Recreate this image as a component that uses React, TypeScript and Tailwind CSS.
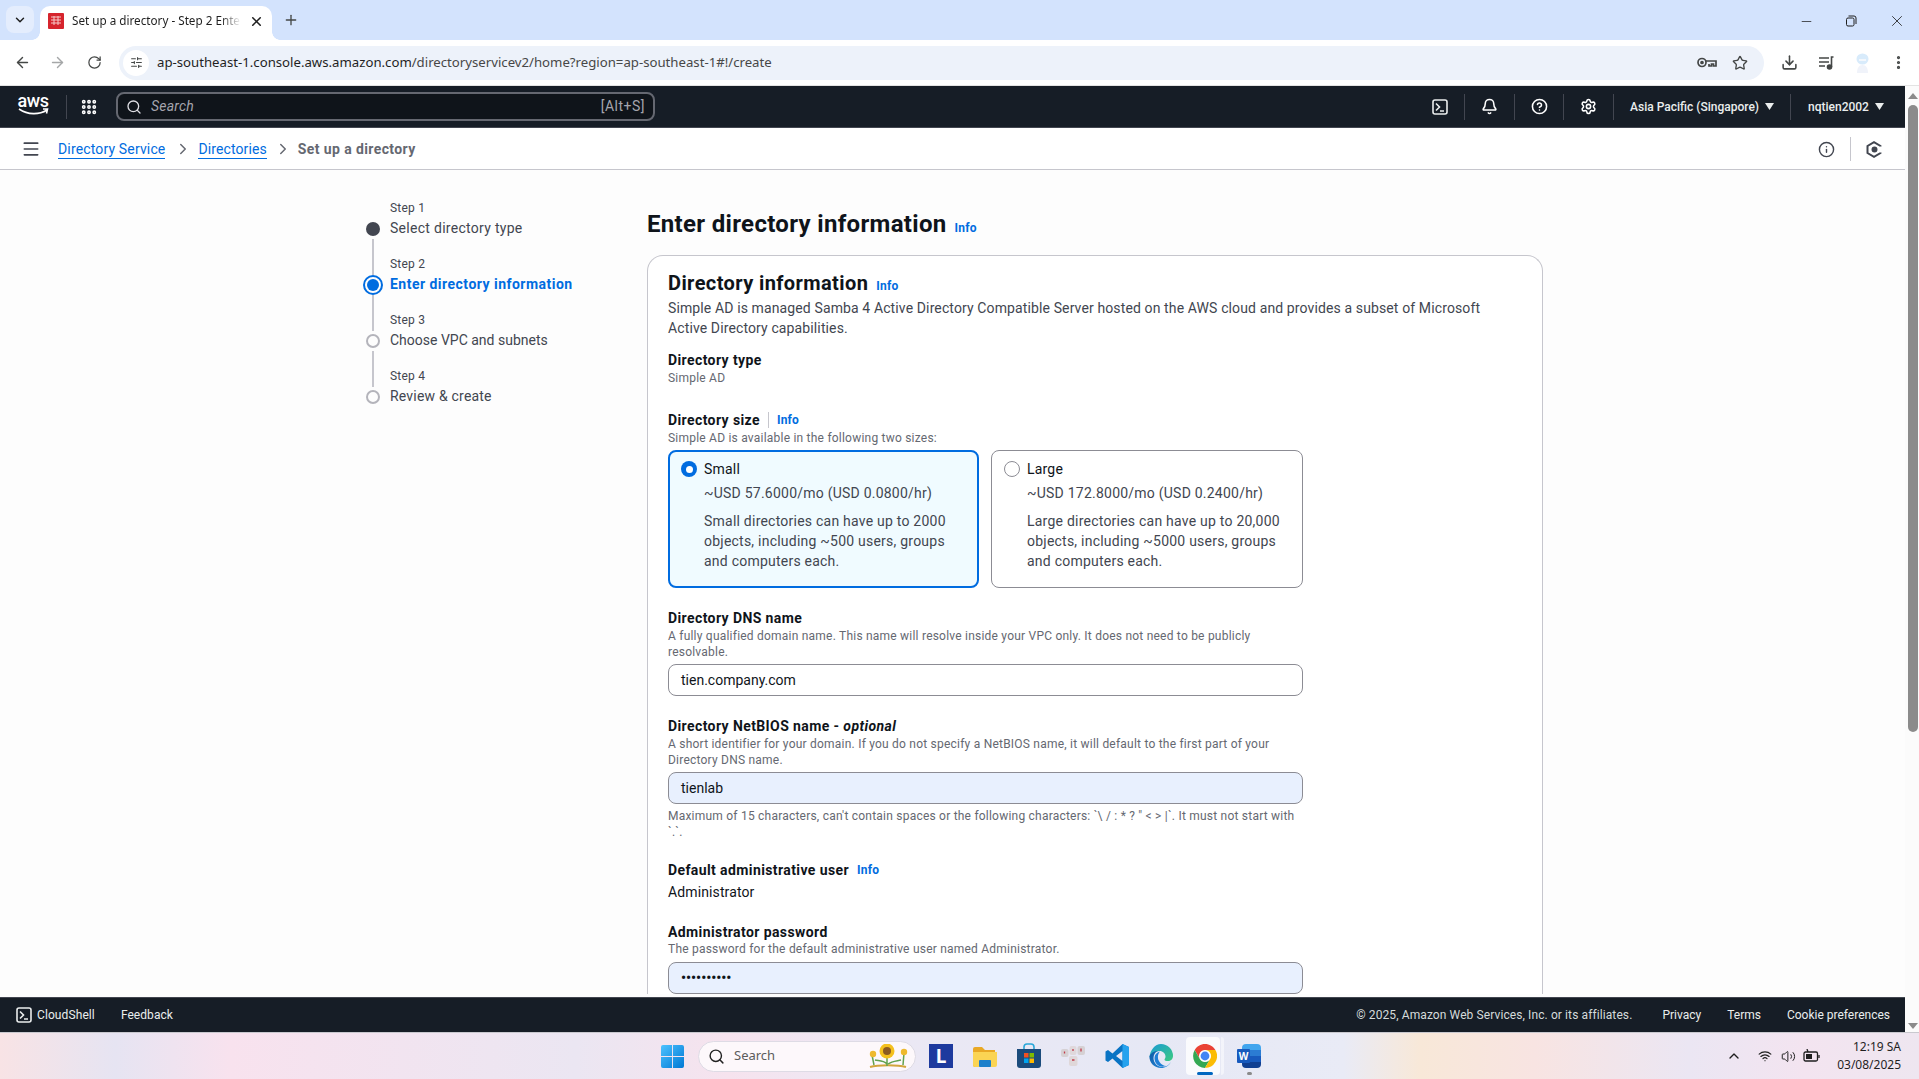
import React from "react";
import { ArrowLeft, ArrowRight, RotateCw, SlidersHorizontal, Star, Download, EllipsisVertical, Menu, ChevronRight, X, Plus, ChevronDown, Minus, Search, Grip, Bell, CircleHelp, Settings, Info, ChevronUp, Wifi, Volume2 } from "lucide-react";

const Shell = ({ size = 16 }: { size?: number }) => (
  <svg width={size} height={size} viewBox="0 0 16 16" fill="none" stroke="currentColor" strokeWidth="1.6">
    <rect x="1" y="1" width="14" height="14" rx="2" />
    <path d="M4 4.5 7.5 8 4 11.5M8 12h4" />
  </svg>
);
const Caret = () => (
  <svg width="9" height="7" viewBox="0 0 9 7" className="shrink-0"><path d="M0 0h9L4.5 7z" fill="currentColor" /></svg>
);
const InfoLink = ({ cls = "" }: { cls?: string }) => <span className={`text-[12px] font-bold tracking-[0.2px] text-[#006ce0] ${cls}`}>Info</span>;

const steps = [
  { l: "Step 1", t: "Select directory type", s: "done", c: "tracking-[0.29px] text-[#424650]" },
  { l: "Step 2", t: "Enter directory information", s: "active", c: "font-bold tracking-[0.48px] text-[#006ce0]" },
  { l: "Step 3", t: "Choose VPC and subnets", s: "todo", c: "text-[#424650]" },
  { l: "Step 4", t: "Review & create", s: "todo", c: "tracking-[0.2px] text-[#424650]" },
];

function Wizard() {
  return (
    <div className="w-[284px] shrink-0 pt-[29px]">
      {steps.map((s, i) => (
        <div key={s.l}>
          <div className="flex h-5 items-center">
            <div className="flex h-full w-5 justify-center">{i > 0 && <div className="h-full w-[2px] bg-[#c6c6cd]" />}</div>
            <div className="mb-[2px] ml-[7px] text-[12px] tracking-[0.2px] text-[#424650]">{s.l}</div>
          </div>
          <div className="flex h-9">
            <div className="flex w-5 flex-col items-center">
              <div className="flex h-5 w-5 shrink-0 items-center justify-center">
                {s.s === "done" && <div className="h-[14px] w-[14px] rounded-full bg-[#424650]" />}
                {s.s === "active" && (
                  <div className="flex h-5 w-5 items-center justify-center rounded-full border-2 border-[#006ce0]">
                    <div className="h-3 w-3 rounded-full bg-[#006ce0]" />
                  </div>
                )}
                {s.s === "todo" && <div className="h-[14px] w-[14px] rounded-full border-2 border-[#b4b4bb]" />}
              </div>
              {i < 3 && <div className="w-[2px] flex-1 bg-[#c6c6cd]" />}
            </div>
            <div className={`ml-[7px] mt-[-1px] h-5 text-[14px] leading-5 ${s.c}`}>{s.t}</div>
          </div>
        </div>
      ))}
    </div>
  );
}

function Tile({ name, price, lines, selected }: { name: string; price: string; lines: string[]; selected?: boolean }) {
  return (
    <div className={`h-[138px] rounded-lg ${selected ? "w-[311px] border-2 border-[#006ce0] bg-[#f0fbff] pl-[11px] pt-[7px]" : "w-[312px] border border-[#8c8c94] bg-white pl-[12px] pt-[8px]"}`}>
      <div className="flex h-5 items-center gap-[7px]">
        {selected ? (
          <div className="flex h-4 w-4 items-center justify-center rounded-full bg-[#006ce0]"><div className="h-[7px] w-[7px] rounded-full bg-white" /></div>
        ) : (
          <div className="h-4 w-4 rounded-full border border-[#8c8c94] bg-white" />
        )}
        <span className="text-[14px] tracking-[0.2px] text-[#0f141a]">{name}</span>
      </div>
      <div className="mt-[4px] pl-[23px] text-[14px] leading-5 tracking-[0.23px] text-[#424650]">{price}</div>
      <div className="mt-[8px] pl-[23px] text-[14px] leading-5 tracking-[0.23px] text-[#424650]">
        {lines.map((x) => <div key={x}>{x}</div>)}
      </div>
    </div>
  );
}

const Label = ({ children, cls = "" }: { children: React.ReactNode; cls?: string }) => (
  <div className={`text-[14px] font-bold leading-[18px] tracking-[0.4px] text-[#0f141a] ${cls}`}>{children}</div>
);
const Desc = ({ children, cls = "" }: { children: React.ReactNode; cls?: string }) => (
  <div className={`text-[12px] leading-4 tracking-[0.22px] text-[#656871] ${cls}`}>{children}</div>
);
const Field = ({ v, auto, cls = "" }: { v: string; auto?: boolean; cls?: string }) => (
  <div className={`flex h-[32px] items-center rounded-lg border border-[#8c8c94] px-3 text-[14px] text-[#0f141a] ${auto ? "bg-[#e8f0fe]" : "bg-white"} ${cls}`}>{v}</div>
);

function Card() {
  return (
    <div className="mt-[11px] rounded-t-2xl border border-b-0 border-[#c6c6cd] bg-white px-5 pt-[11px]">
      <div className="flex items-baseline gap-2 leading-[32px]">
        <span className="text-[20px] font-bold tracking-[0.4px] text-[#0f141a]">Directory information</span>
        <InfoLink />
      </div>
      <div className="mt-[-4px] text-[14px] leading-5 tracking-[0.12px] text-[#424650]">
        Simple AD is managed Samba 4 Active Directory Compatible Server hosted on the AWS cloud and provides a subset of Microsoft<br />Active Directory capabilities.
      </div>
      <Label cls="mt-[13px]">Directory type</Label>
      <Desc cls="mt-[1px]">Simple AD</Desc>
      <div className="w-[635px]">
        <div className="mt-[25px] flex h-[18px] items-center">
          <Label>Directory size</Label>
          <div className="mx-[8px] h-4 w-px bg-[#c6c6cd]" />
          <InfoLink />
        </div>
        <Desc cls="mt-[1px]">Simple AD is available in the following two sizes:</Desc>
        <div className="mt-[4px] flex justify-between">
          <Tile selected name="Small" price="~USD 57.6000/mo (USD 0.0800/hr)" lines={["Small directories can have up to 2000", "objects, including ~500 users, groups", "and computers each."]} />
          <Tile name="Large" price="~USD 172.8000/mo (USD 0.2400/hr)" lines={["Large directories can have up to 20,000", "objects, including ~5000 users, groups", "and computers each."]} />
        </div>
        <Label cls="mt-[21px]">Directory DNS name</Label>
        <Desc cls="mt-[1px]">A fully qualified domain name. This name will resolve inside your VPC only. It does not need to be publicly<br />resolvable.</Desc>
        <Field v="tien.company.com" cls="mt-[4px]" />
        <Label cls="mt-[21px]">Directory NetBIOS name - <i>optional</i></Label>
        <Desc cls="mt-[1px]">A short identifier for your domain. If you do not specify a NetBIOS name, it will default to the first part of your<br />Directory DNS name.</Desc>
        <Field v="tienlab" auto cls="mt-[4px]" />
        <Desc cls="mt-[4px]">Maximum of 15 characters, can't contain spaces or the following characters: `\ / : * ? " &lt; &gt; |`. It must not start with<br />`.`.</Desc>
        <div className="mt-[21px] flex items-center gap-2"><Label>Default administrative user</Label><InfoLink /></div>
        <div className="mt-[3px] text-[14px] leading-5 tracking-[0.12px] text-[#0f141a]">Administrator</div>
        <Label cls="mt-[21px]">Administrator password</Label>
        <Desc>The password for the default administrative user named Administrator.</Desc>
        <Field v="••••••••••" auto cls="mt-[5px] font-bold" />
      </div>
    </div>
  );
}

function TabStrip() {
  return (
    <div className="flex h-[40px] items-end bg-[#d3e3fd] font-['Noto_Sans',sans-serif] text-[#1f1f1f]">
      <div className="mb-[7px] ml-[6px] flex h-[27px] w-[28px] items-center justify-center rounded-lg bg-[#e4edfd]"><ChevronDown size={14} strokeWidth={2.5} /></div>
      <div className="relative ml-[6px] flex h-[34px] w-[232px] items-center rounded-t-[10px] bg-white pb-[4px] pl-[8px] text-[11.7px]">
        <div className="absolute bottom-0 left-[-8px] h-2 w-2 bg-[radial-gradient(circle_at_0_0,transparent_7.5px,white_8px)]" />
        <div className="absolute bottom-0 right-[-8px] h-2 w-2 bg-[radial-gradient(circle_at_100%_0,transparent_7.5px,white_8px)]" />
        <svg width="16" height="16" viewBox="0 0 16 16" className="shrink-0"><rect width="16" height="16" rx="1" fill="#d6242d" /><path d="M3 4h10M3 7h10M3 10h10M6 3v9M10 3v9" stroke="#f6c9c9" strokeWidth="1" /></svg>
        <span className="ml-[8px] w-[169px] overflow-hidden whitespace-nowrap [mask-image:linear-gradient(90deg,black_88%,transparent)]">Set up a directory - Step 2 Enter</span>
        <X size={15} className="ml-[8px]" strokeWidth={2.5} />
      </div>
      <Plus size={16} className="mb-[12px] ml-[11px] text-[#444746]" strokeWidth={2} />
      <div className="mb-[10px] ml-auto flex items-center text-[#1f1f1f]">
        <Minus size={15} className="mr-[31px]" strokeWidth={1.2} />
        <svg width="12" height="12" viewBox="0 0 12 12" fill="none" stroke="currentColor" className="mr-[31px]"><rect x="1.5" y="3" width="7.5" height="8" rx="1.5" /><path d="M3.5 1h5.5a2 2 0 0 1 2 2v6" /></svg>
        <X size={18} className="mr-[13px]" strokeWidth={1.1} />
      </div>
    </div>
  );
}

function Toolbar() {
  return (
    <div className="flex h-[46px] items-center border-b border-[#e3e3e3] bg-white font-['Noto_Sans',sans-serif] text-[#444746]">
      <ArrowLeft size={17} className="ml-[14px]" strokeWidth={2} />
      <ArrowRight size={17} className="ml-[18px] text-[#a5a7a8]" strokeWidth={2} />
      <RotateCw size={15} className="ml-[21px]" strokeWidth={2} />
      <div className="ml-[17px] flex h-[34px] w-[1645px] items-center rounded-full bg-[#edf2fa] pl-[4px] pr-[16px]">
        <div className="flex h-[26px] w-[26px] items-center justify-center rounded-full bg-white"><SlidersHorizontal size={13} strokeWidth={2} /></div>
        <span className="ml-[8px] mt-[1px] whitespace-nowrap text-[13.2px] text-[#1f1f1f]">ap-southeast-1.console.aws.amazon.com<span className="text-[#474747]">/directoryservicev2/home?region=ap-southeast-1#!/create</span></span>
        <div className="ml-auto flex items-center gap-[15px]">
          <svg width="20" height="11" viewBox="0 0 20 11" fill="none" stroke="currentColor" strokeWidth="1.7"><circle cx="5" cy="5.500" r="4" /><circle cx="5" cy="5.500" r="1" fill="currentColor" /><path d="M9 4h10v5h-2.500V7h-2v2H12V7" /></svg>
          <Star size={16} strokeWidth={2} />
        </div>
      </div>
      <Download size={17} className="ml-[17px]" strokeWidth={2.2} />
      <svg width="16" height="14" viewBox="0 0 16 14" fill="none" stroke="currentColor" strokeWidth="1.6" className="ml-[21px]"><path d="M0 2h10M0 6h10M0 10h6M14.500 1h-2v10" /><circle cx="10.500" cy="11" r="2" fill="currentColor" /></svg>
      <svg width="15" height="20" viewBox="0 0 15 20" className="ml-[20px]"><ellipse cx="7.500" cy="6" rx="6" ry="5.500" fill="#d8ebfb" /><path d="M2 20c0-5 2-8 5.500-8s5.500 3 5.500 8z" fill="#f0f3fa" /><path d="M4 7h7" stroke="#f3f7fc" strokeWidth="2" /></svg>
      <EllipsisVertical size={17} className="ml-[20px]" strokeWidth={2.5} />
    </div>
  );
}

function AwsNav() {
  const Cell = ({ w, children }: { w: string; children: React.ReactNode }) => (
    <div className={`flex h-[26px] items-center justify-center border-l border-[#424650] ${w}`}>{children}</div>
  );
  return (
    <div className="flex h-[42px] items-center border-b border-[#424650] bg-[#161d26] text-[#eaeded]">
      <div className="ml-[17px] flex w-[32px] flex-col items-center text-white">
        <span className="mt-[-3px] text-[18px] font-medium leading-[13px] tracking-[-0.4px]">aws</span>
        <svg width="31" height="8" viewBox="0 0 31 8" fill="none" className="mt-[1px]"><path d="M1 1c9 6 20 6 28 1M25 1h4.500l-1 4.500" stroke="#fff" strokeWidth="1.6" /></svg>
      </div>
      <div className="ml-[17px] h-6 w-px bg-[#424650]" />
      <Grip size={18} strokeWidth={3.2} className="ml-[13px] text-white" />
      <div className="ml-[18px] flex h-[29px] w-[539px] items-center rounded-lg border-2 border-[#656871] bg-[#0f141a] px-2">
        <Search size={16} className="text-[#dedee3]" strokeWidth={2} />
        <span className="ml-[9px] text-[14px] italic tracking-[0.2px] text-[#a4a4ad]">Search</span>
        <span className="ml-auto text-[14px] tracking-[0.5px] text-[#a4a4ad]">[Alt+S]</span>
      </div>
      <div className="ml-auto flex items-center">
        <div className="flex h-[26px] w-[49px] items-center justify-center"><Shell size={16} /></div>
        <Cell w="w-[50px]"><Bell size={17} strokeWidth={2.2} className="text-white" /></Cell>
        <Cell w="w-[49px]"><CircleHelp size={17} strokeWidth={2.2} className="text-white" /></Cell>
        <Cell w="w-[50px]"><Settings size={17} strokeWidth={2.2} className="text-white" /></Cell>
        <div className="flex h-[26px] w-[177px] items-center gap-[6px] whitespace-nowrap border-l border-[#424650] pl-[16px] text-[12px] font-medium"><span>Asia Pacific (Singapore)</span><Caret /></div>
        <div className="flex h-[26px] w-[115px] items-center gap-[6px] border-l border-[#424650] pl-[17px] text-[12px] font-medium"><span>nqtien2002</span><Caret /></div>
      </div>
    </div>
  );
}

function Breadcrumb() {
  return (
    <div className="flex h-[42px] shrink-0 items-center border-b border-[#c6c6cd] bg-white pt-[1px] text-[14px] text-[#424650]">
      <Menu size={20} className="ml-[21px]" strokeWidth={2} />
      <span className="ml-[17px] border-b border-[#006ce0] leading-[18px] tracking-[0.15px] text-[#006ce0]">Directory Service</span>
      <ChevronRight size={18} className="ml-[9px] text-[#656871]" />
      <span className="ml-[6px] border-b border-[#006ce0] leading-[18px] tracking-[0.1px] text-[#006ce0]">Directories</span>
      <ChevronRight size={18} className="ml-[7px] text-[#656871]" />
      <span className="ml-[6px] font-bold tracking-[0.4px] text-[#656871]">Set up a directory</span>
      <div className="ml-auto flex items-center">
        <Info size={17} strokeWidth={2} className="mr-[15px]" />
        <div className="h-6 w-px bg-[#c6c6cd]" />
        <svg width="16" height="17" viewBox="0 0 16 17" fill="none" stroke="#424650" strokeWidth="2" className="ml-[15px] mr-[23px]"><path d="M14.500 5.500V5L8 1.200 1.500 5v7L8 15.800l6.500-3.800v-.5" /><circle cx="8.500" cy="8.500" r="2" fill="#424650" /></svg>
      </div>
    </div>
  );
}

function Footer() {
  return (
    <div className="flex h-[35px] shrink-0 items-center border-t border-[#424650] bg-[#161d26] text-[12px] text-[#eaeded]">
      <div className="ml-[16px]"><Shell size={16} /></div>
      <span className="ml-[5px] tracking-[0.1px]">CloudShell</span>
      <span className="ml-[26px] tracking-[0.05px]">Feedback</span>
      <span className="ml-auto tracking-[0.1px] text-[#d5dbdb]">© 2025, Amazon Web Services, Inc. or its affiliates.</span>
      <span className="ml-[30px]">Privacy</span>
      <span className="ml-[26px]">Terms</span>
      <span className="ml-[26px] mr-[15px]">Cookie preferences</span>
    </div>
  );
}

function Scrollbar() {
  return (
    <div className="flex w-[14px] shrink-0 flex-col items-end bg-[#fbfbfb]">
      <svg width="10" height="10" viewBox="0 0 10 10" className="mr-[1px] mt-[5px] shrink-0"><path d="M0 8h10L5 2z" fill="#8b8b8b" /></svg>
      <div className="mr-[1px] mt-[4px] h-[627px] w-[10px] rounded-full bg-[#8b8b8b]" />
      <svg width="10" height="10" viewBox="0 0 10 10" className="mb-[1px] mr-[1px] mt-auto shrink-0"><path d="M0 2h10L5 8z" fill="#8b8b8b" /></svg>
    </div>
  );
}

const Tile2 = ({ children, active, dot }: { children: React.ReactNode; active?: boolean; dot?: boolean }) => (
  <div className="relative flex h-[40px] w-[40px] items-center justify-center">
    {active && <div className="absolute inset-y-[1px] left-[5px] w-[3px] translate-x-[31px] rounded-r bg-white/50" />}
    {active && <div className="absolute inset-y-[1px] left-[1px] w-[34px] rounded bg-white/80" />}
    <div className="relative flex items-center justify-center">{children}</div>
    {active && <div className="absolute bottom-[1px] left-[12px] h-[3px] w-4 rounded-full bg-[#0067c0]" />}
    {dot && <div className="absolute bottom-[1px] left-[18px] h-[3px] w-[5px] rounded-full bg-[#8a8a8a]" />}
  </div>
);

function Taskbar() {
  return (
    <div className="flex h-[47px] items-center border-t border-[#c9c9cf] bg-[linear-gradient(90deg,#f8e3e5_0%,#e6e4f2_6%,#f8e2ee_12%,#ebe6f2_30%,#f6e3ee_38%,#ece8f4_45%,#e6e8f5_60%,#e9ebf6_70%,#f8e8d8_74%,#f8e4e2_80%,#ebe6f3_88%,#f3e4f0_94%,#eee6f0_100%)] font-['Noto_Sans',sans-serif]">
      <svg width="23" height="23" viewBox="0 0 24 24" className="ml-[661px] shrink-0">
        <defs><linearGradient id="w" x1="0" y1="0" x2="1" y2="1"><stop offset="0" stopColor="#4cc2ff" /><stop offset="1" stopColor="#0078d4" /></linearGradient></defs>
        <path d="M0 2a2 2 0 0 1 2-2h9.500v11.500H0zM12.500 0H22a2 2 0 0 1 2 2v9.500H12.500zM0 12.500h11.500V24H2a2 2 0 0 1-2-2zM12.500 12.500H24V22a2 2 0 0 1-2 2h-9.500z" fill="url(#w)" />
      </svg>
      <div className="ml-[14px] flex h-[31px] w-[218px] items-center rounded-full border border-[#dedbe5] bg-[#fdf8fb] pl-[9px] text-[13px] text-[#5c5c5c]">
        <Search size={17} className="text-[#222]" strokeWidth={2} />
        <span className="ml-[9px]">Search</span>
        <svg width="40" height="24" viewBox="0 0 40 24" className="ml-auto mr-[7px]">
          <path d="M2 23c8-2.500 28-2.500 36 0" stroke="#d2a53d" strokeWidth="2" fill="none" />
          <path d="M19 22V12M6 21 4 11M35 21 36 9M19 20c-4-4-9-3-12-4M20 20c4-3 9-3 13-4" stroke="#62a24e" strokeWidth="1.500" fill="none" />
          <circle cx="19" cy="7" r="7.500" fill="#f4c01e" /><circle cx="19" cy="7" r="4" fill="#8b5a22" />
          <circle cx="5" cy="10" r="3.200" fill="#eeb92e" /><circle cx="36" cy="8" r="3.200" fill="#eeb92e" />
        </svg>
      </div>
      <div className="ml-[5px] flex items-center gap-[4px]">
        <Tile2><div className="flex h-[24px] w-[24px] items-end justify-center bg-[#1e3a9e] pb-[2px] text-[19px] font-bold leading-[20px] text-white">L</div></Tile2>
        <Tile2><svg width="24" height="24" viewBox="0 0 24 24"><path d="M0 5a2 2 0 0 1 2-2h7l3 3h10v15a2 2 0 0 1-2 2H2a2 2 0 0 1-2-2z" fill="#e9a825" /><path d="M0 8h24v13a2 2 0 0 1-2 2H2a2 2 0 0 1-2-2z" fill="#fbd453" /><rect x="6" y="16" width="12" height="7" rx="1" fill="#1c7fcb" /></svg></Tile2>
        <Tile2><svg width="24" height="26" viewBox="0 0 24 26"><path d="M7 6V4a3 3 0 0 1 3-3h4a3 3 0 0 1 3 3v2" fill="none" stroke="#2aa7d8" strokeWidth="1.600" /><path d="M0 6h24v16a3 3 0 0 1-3 3H3a3 3 0 0 1-3-3z" fill="#1b4b7c" /><rect x="7" y="10" width="4.500" height="4.500" fill="#f25022" /><rect x="12.500" y="10" width="4.500" height="4.500" fill="#7fba00" /><rect x="7" y="15.500" width="4.500" height="4.500" fill="#00a4ef" /><rect x="12.500" y="15.500" width="4.500" height="4.500" fill="#ffb900" /></svg></Tile2>
        <Tile2><svg width="24" height="22" viewBox="0 0 24 22"><rect x="0" y="4" width="7.500" height="8" rx="2" fill="#d6d1d4" /><rect x="8.500" y="1" width="7" height="9" rx="2" fill="#dfd8db" /><rect x="16.500" y="1" width="7.500" height="9" rx="2" fill="#d6d1d4" /><rect x="8" y="11" width="8.500" height="10" rx="2" fill="#dfd7d9" /><path d="M3.500 6.500v2M12 4v2M20 3.500v3M11 15h2.500" stroke="#c23b4b" strokeWidth="1.300" /></svg></Tile2>
        <Tile2><svg width="24" height="24" viewBox="0 0 24 24"><path fillRule="evenodd" d="M17.500 0 24 3v18l-6.500 3L7.500 14.500 3 18 .5 16.500v-9L3 6l4.500 3.500zM17.500 7 11 12l6.500 5z" fill="#0a74c4" /><path fillRule="evenodd" d="M17.500 0 24 3v18l-6.500 3z" fill="#25a2ee" /></svg></Tile2>
        <Tile2><svg width="24" height="24" viewBox="0 0 24 24"><defs><linearGradient id="e" x1="0" y1="0" x2="1" y2="1"><stop offset="0" stopColor="#1a9ad6" /><stop offset="1" stopColor="#3ccb7f" /></linearGradient><linearGradient id="e2" x1="0" y1="0" x2="1" y2="1"><stop offset="0" stopColor="#0c59a4" /><stop offset="1" stopColor="#2a8fe0" /></linearGradient></defs><path d="M12 0a12 12 0 0 1 12 12c0 3-2.400 5-5 5-2 0-3.500-.5-3.500-1.500 0-.5 1-1 1-3 0-3-2.500-5.500-6-5.500-4.500 0-8 3-10 6.500C1 6 6 0 12 0z" fill="url(#e)" /><path d="M.4 12.500C2 8.500 5.500 7 9 7c-3 1-4.500 4-4.500 7 0 5 4 9 9 9 3 0 6.500-1.500 8.500-5.500C20.500 21.500 16.500 24 12 24 5.500 24 .4 19 .4 12.500z" fill="url(#e2)" /><path d="M5.500 14c0-3 2-5.500 5.500-6.500-1.500 1.500-2.500 4-2 7 .5 3 3.500 7 8 7.500-1 .5-2.500.8-3.500.8-4.500 0-8-4-8-8.800z" fill="#1f7fd6" /></svg></Tile2>
        <Tile2 active><svg width="24" height="24" viewBox="0 0 24 24"><path d="M12 0C7.600 0 3.800 2.400 1.700 6l5.100 9A6 6 0 0 1 12 6h10.400C20.300 2.400 16.400 0 12 0z" fill="#ea4335" /><path d="M1.700 6A12 12 0 0 0 12 24l5.200-9a6 6 0 0 1-10.400 0z" fill="#34a853" /><path d="M22.400 6H12a6 6 0 0 1 5.200 9L12 24A12 12 0 0 0 22.400 6z" fill="#fbbc04" /><circle cx="12" cy="12" r="5.600" fill="#fff" /><circle cx="12" cy="12" r="4.400" fill="#4285f4" /></svg></Tile2>
        <Tile2 dot><div className="relative h-[24px] w-[24px]"><div className="absolute bottom-0 right-0 h-[24px] w-[19px] rounded-sm bg-[linear-gradient(#41a5ee_25%,#2b7cd3_25%,#2b7cd3_50%,#185abd_50%,#185abd_75%,#103f91_75%)]" /><div className="absolute left-0 top-[5px] flex h-[14px] w-[13px] items-center justify-center rounded-[1px] bg-[#185abd] text-[10px] font-bold text-white">W</div></div></Tile2>
      </div>
      <div className="ml-auto flex items-center text-[#1f1f1f]">
        <ChevronUp size={16} strokeWidth={2} />
        <Wifi size={14} className="ml-[16px]" strokeWidth={2} />
        <Volume2 size={15} className="ml-[9px]" strokeWidth={1.6} />
        <svg width="18" height="14" viewBox="0 0 18 14" className="ml-[7px]" fill="none" stroke="currentColor" strokeWidth="1.300"><rect x="1" y="3" width="13.500" height="9" rx="1.500" /><rect x="3" y="5" width="6" height="5" fill="currentColor" stroke="none" /><path d="M16 6v3" /><path d="m4 0 1 3" /></svg>
        <div className="ml-[16px] mr-[18px] text-right text-[12px] leading-[18px]"><div>12:19 SA</div><div>03/08/2025</div></div>
      </div>
    </div>
  );
}

export default function App() {
  return (
    <div className="flex h-[1079px] w-[1919px] flex-col overflow-hidden bg-white">
      <TabStrip />
      <Toolbar />
      <div className="flex min-h-0 flex-1 font-['Roboto',sans-serif]">
        <div className="flex min-w-0 flex-1 flex-col">
          <AwsNav />
          <Breadcrumb />
          <div className="flex min-h-0 flex-1 overflow-hidden bg-[#fdfdfd] pl-[363px]">
            <Wizard />
            <div className="w-[896px] shrink-0 pt-[38px]">
              <div className="flex items-baseline gap-2 leading-[32px]">
                <span className="text-[24px] font-bold tracking-[0.32px] text-[#0f141a]">Enter directory information</span>
                <InfoLink />
              </div>
              <Card />
            </div>
          </div>
          <Footer />
        </div>
        <Scrollbar />
      </div>
      <Taskbar />
    </div>
  );
}
